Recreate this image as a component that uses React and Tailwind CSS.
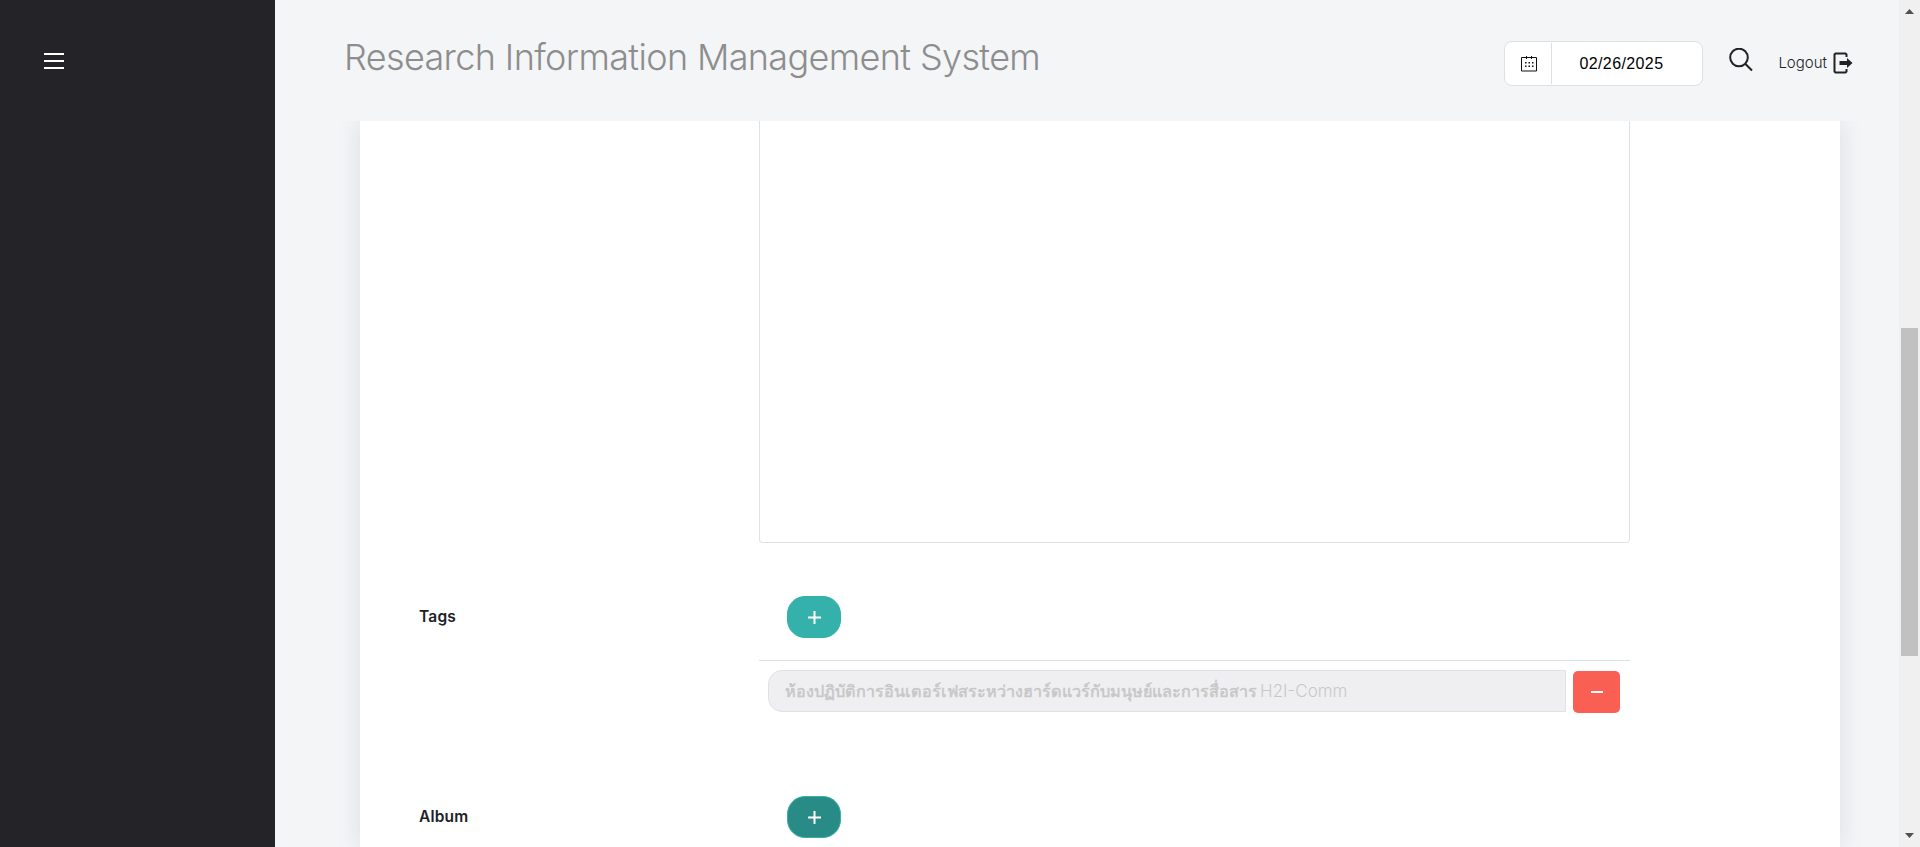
function DateField() {
  return (
    <div className="flex h-[45px] w-[199px] items-center rounded-lg border border-[#dee0e2] bg-white">
      <div className="flex h-[41px] w-[47px] items-center justify-center border-r border-[#dedfe1] pl-px">
        <svg viewBox="0 0 16 16" className="h-4 w-4" fill="none" stroke="#111">
          <path d="M.5 1.500h15v13.500H.5zM5.500 0v3M10.500 0v3" />
          <g fill="#111" stroke="none">
            <path d="M4 6h1.500v1.500H4zM7.500 6H9v1.500H7.500zM11 6h1.500v1.500H11zM4 9.500h1.500V11H4zM7.500 9.500H9V11H7.500zM11 9.500h1.500V11H11z" />
          </g>
        </svg>
      </div>
      <span className="ml-[27px] whitespace-nowrap font-['Liberation_Sans',sans-serif] text-base tracking-[0.4px] text-black">
        02/26/2025
      </span>
    </div>
  );
}

function Header() {
  return (
    <header className="flex h-[121px] shrink-0 items-start bg-[#f3f5f7] pl-[69px]">
      <h1 className="mt-[33px] whitespace-nowrap text-[36px] font-[350] leading-[48px] tracking-[-0.640px] text-[#8d8d8d]">
        Research Information Management System
      </h1>
      <div className="ml-auto flex items-start pr-[46px]">
        <div className="mt-[41px]">
          <DateField />
        </div>
        <svg viewBox="0 0 24 24" className="ml-[26px] mt-12 h-6 w-6" fill="none" stroke="#212226" strokeWidth="2">
          <circle cx="10" cy="9.500" r="8.800" />
          <path d="M16.200 15.700 23 22.500" />
        </svg>
        <span className="ml-[25px] mt-[51px] whitespace-nowrap text-[15px] font-light leading-6 text-[#212529]">
          Logout
        </span>
        <svg viewBox="0 0 20 22" className="ml-1.5 mt-[52px] h-[22px] w-5" fill="none" stroke="#212226" strokeWidth="2">
          <path d="M13.500 5V2.500L12.500 1.500H2.500L1.500 2.500v17l1 1h10l1-1V17" />
          <path d="M6.500 9H14V6l5.500 5-5.500 5v-3H6.500z" fill="#212226" stroke="none" />
        </svg>
      </div>
    </header>
  );
}

function AddButton({ active }) {
  return (
    <button
      className={
        "flex h-[42px] w-[54px] items-center justify-center rounded-[18px] border border-[#34b1aa] " +
        (active ? "bg-[#298b85]" : "bg-[#34b1aa]")
      }
    >
      <svg viewBox="0 0 13 13" className="h-[13px] w-[13px]" stroke="#fff" strokeWidth="2">
        <path d="M0 6.500h13M6.500 0v13" />
      </svg>
    </button>
  );
}

function Label({ children }) {
  return (
    <span className="w-[340px] shrink-0 text-[15.500px] font-semibold leading-6 tracking-[0.2px] text-[#212226]">
      {children}
    </span>
  );
}

function Scrollbar() {
  return (
    <div className="flex w-[21px] shrink-0 flex-col items-center bg-[#f0f0f0]">
      <svg viewBox="0 0 9 5" className="mt-[9px] h-[5px] w-[9px]" fill="#505050">
        <path d="M0 5 4.500 0 9 5z" />
      </svg>
      <div className="mt-[314px] h-[328px] w-[17px] bg-[#c1c1c1]" />
      <svg viewBox="0 0 9 5" className="mb-[9px] mt-auto h-[5px] w-[9px]" fill="#505050">
        <path d="M0 0 4.500 5 9 0z" />
      </svg>
    </div>
  );
}

export default function App() {
  return (
    <div className="flex h-[847px] w-full overflow-hidden bg-[#f3f5f7] font-['Inter',sans-serif]">
      <aside className="w-[275px] shrink-0 bg-[#242328] pl-11 pt-[53px]">
        <div className="flex flex-col gap-[5px]">
          <div className="h-0.5 w-5 bg-white" />
          <div className="h-0.5 w-5 bg-white" />
          <div className="h-0.5 w-5 bg-white" />
        </div>
      </aside>
      <div className="flex min-w-0 flex-1 flex-col">
        <Header />
        <main className="flex min-h-0 flex-1 overflow-hidden pl-[85px] pr-[59px]">
          <section className="flex-1 bg-white pl-[59px] shadow-[0_0_24px_rgba(30,35,60,0.11)]">
            <div className="ml-[340px] h-[422px] w-[871px] rounded-b border border-t-0 border-[#dee2e6]" />
            <div className="mt-[53px] flex h-[42px] items-center">
              <Label>Tags</Label>
              <div className="pl-7">
                <AddButton />
              </div>
            </div>
            <div className="ml-[340px] mt-[22px] h-px w-[871px] bg-[#dee2e6]" />
            <div className="ml-[349px] mt-[9px] flex h-[43px]">
              <div className="flex h-[42px] w-[798px] items-center rounded-l-[14px] border border-[#dee2e6] bg-[#efeff2] pl-4 text-[#c9c8c8]">
                <p className="whitespace-nowrap text-[16.200px] font-semibold leading-6">
                  ห้องปฏิบัติการอินเตอร์เฟสระหว่างฮาร์ดแวร์กับมนุษย์และการสื่อสาร{" "}
                  <span className="-ml-px text-[17px] font-light">H2I-Comm</span>
                </p>
              </div>
              <button className="ml-[7px] mt-px flex h-[42px] w-[47px] items-center justify-center rounded-[5px] bg-[#f95f53]">
                <span className="h-0.5 w-3 bg-white" />
              </button>
            </div>
            <div className="mt-[83px] flex h-[42px] items-center">
              <Label>Album</Label>
              <div className="pl-7">
                <AddButton active />
              </div>
            </div>
          </section>
        </main>
      </div>
      <Scrollbar />
    </div>
  );
}
